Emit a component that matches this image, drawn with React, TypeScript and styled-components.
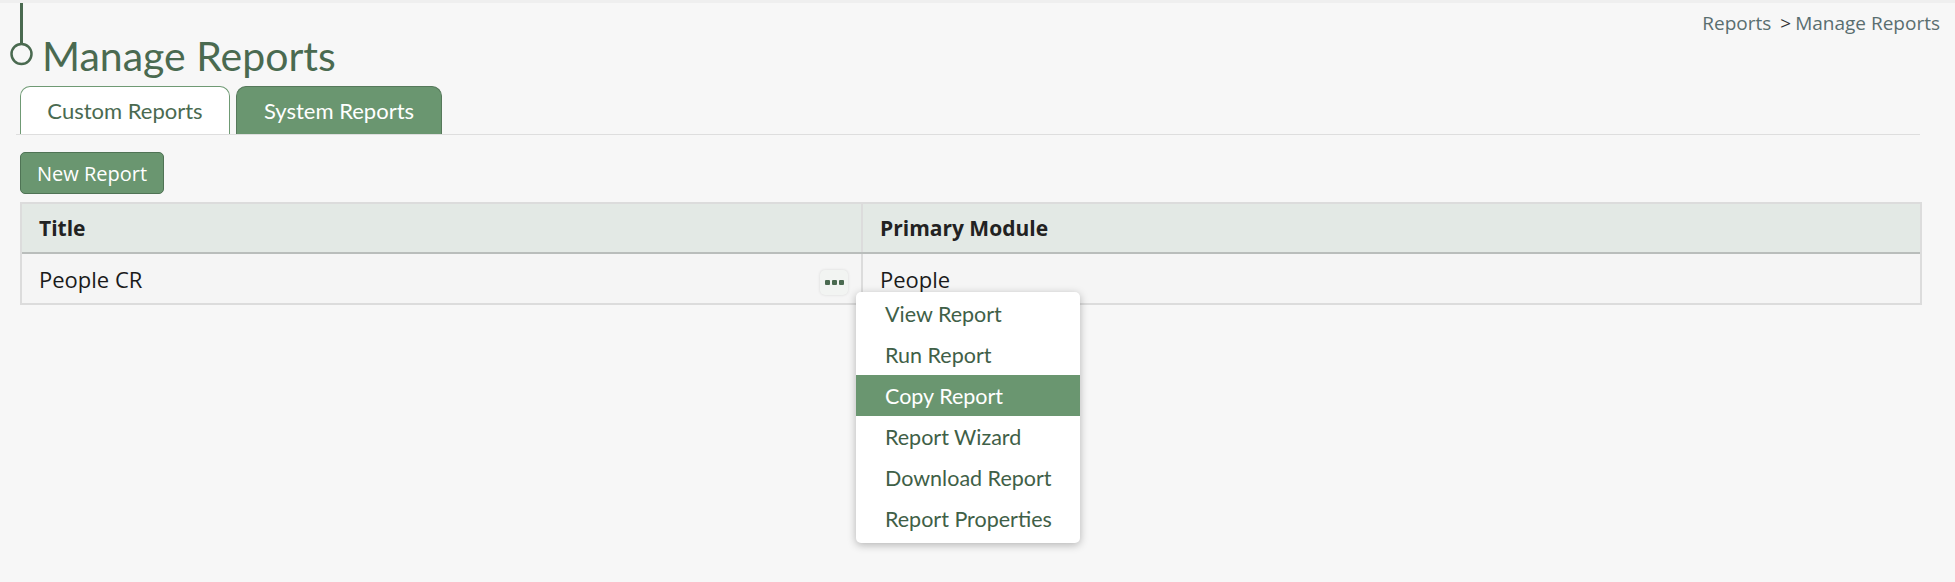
import React from 'react';
import styled, { createGlobalStyle } from 'styled-components';

const GlobalStyle = createGlobalStyle`
  html, body {
    margin: 0;
    padding: 0;
    background: #f7f7f7;
  }
  body {
    font-family: 'Open Sans', 'Noto Sans', sans-serif;
    color: #222;
  }
`;

const Page = styled.div`
  width: 1955px;
  height: 582px;
  background: #f7f7f7;
  border-top: 3px solid #efefef;
  box-sizing: border-box;
  overflow: hidden;
`;

const Header = styled.div`
  display: flex;
  justify-content: space-between;
  align-items: flex-start;
  padding: 0 15px 0 9px;
  height: 83px;
`;

const TitleWrap = styled.div`
  display: flex;
  align-items: flex-start;
`;

const Title = styled.h2`
  margin: 30px 0 0 7px;
  font-family: 'Lato', sans-serif;
  font-weight: 400;
  font-size: 41px;
  line-height: 46px;
  color: #4a6a50;
`;

const Breadcrumb = styled.div`
  margin-top: 7px;
  font-family: 'Open Sans', sans-serif;
  font-size: 19px;
  color: #5a6e70;
  span {
    color: #333;
    margin: 0 4px 0 9px;
  }
`;

const Tabs = styled.div`
  display: flex;
  gap: 6px;
  margin: 0 35px 0 16px;
  padding-left: 4px;
  border-bottom: 1px solid #dedede;
`;

const Tab = styled.div<{ active?: boolean }>`
  width: 210px;
  height: 48px;
  box-sizing: border-box;
  display: flex;
  align-items: center;
  justify-content: center;
  border-radius: 10px 10px 0 0;
  border: 1px solid ${p => (p.active ? '#6f9a74' : '#56795b')};
  border-bottom: none;
  background: ${p => (p.active ? '#fff' : '#6a9670')};
  color: ${p => (p.active ? '#4a6a50' : '#fff')};
  font-family: 'Lato', sans-serif;
  font-size: 22px;
  &:last-child {
    width: 206px;
  }
`;

const Content = styled.div`
  padding: 17px 33px 0 20px;
`;

const Button = styled.button`
  height: 42px;
  width: 144px;
  background: #6a9670;
  border: 1px solid #4f7355;
  border-radius: 5px;
  color: #fff;
  font-family: 'Open Sans', sans-serif;
  font-size: 20px;
  padding: 0;
`;

const Table = styled.div`
  margin-top: 8px;
  border: 2px solid #dcdcdc;
  width: 1902px;
  box-sizing: border-box;
  position: relative;
`;

const Row = styled.div<{ head?: boolean }>`
  display: grid;
  grid-template-columns: 839px 1fr;
  height: ${p => (p.head ? '48px' : '49px')};
  background: ${p => (p.head ? '#e3e9e5' : '#f5f5f5')};
  border-bottom: ${p => (p.head ? '2px solid #b9bdbb' : 'none')};
`;

const Cell = styled.div<{ head?: boolean }>`
  display: flex;
  align-items: center;
  justify-content: space-between;
  padding: 0 13px 0 17px;
  font-size: ${p => (p.head ? '21px' : '22px')};
  font-weight: ${p => (p.head ? 700 : 400)};
  color: ${p => (p.head ? '#222' : '#1a1a1a')};
  & + & {
    border-left: 2px solid #dcdcdc;
  }
`;

const DotsButton = styled.div`
  width: 28px;
  height: 25px;
  margin-top: 8px;
  border-radius: 5px;
  background: #f2f4f2;
  box-shadow: 0 0 3px rgba(0, 0, 0, 0.12);
  display: flex;
  align-items: center;
  justify-content: center;
  gap: 2px;
  i {
    width: 5px;
    height: 5px;
    background: #4a6a50;
    border-radius: 1px;
  }
`;

const Menu = styled.ul`
  position: absolute;
  left: 834px;
  top: 88px;
  width: 224px;
  margin: 0;
  padding: 1px 0 4px;
  list-style: none;
  background: #fff;
  border-radius: 5px;
  box-shadow: 0 2px 8px rgba(0, 0, 0, 0.28);
  z-index: 2;
`;

const MenuItem = styled.li<{ active?: boolean }>`
  height: 41px;
  display: flex;
  align-items: center;
  padding-left: 29px;
  font-family: 'Lato', sans-serif;
  font-size: 21.5px;
  color: ${p => (p.active ? '#fff' : '#3f6047')};
  background: ${p => (p.active ? '#6a9670' : 'transparent')};
`;

const menuItems = [
  'View Report',
  'Run Report',
  'Copy Report',
  'Report Wizard',
  'Download Report',
  'Report Properties',
];

export default function App() {
  return (
    <Page>
      <GlobalStyle />
      <Header>
        <TitleWrap>
          <svg width="26" height="70" viewBox="0 0 26 70">
            <line x1="12.5" y1="0" x2="12.5" y2="41" stroke="#4a6a50" strokeWidth="3" />
            <circle cx="12.5" cy="51" r="10" fill="none" stroke="#4a6a50" strokeWidth="2.5" />
          </svg>
          <Title>Manage Reports</Title>
        </TitleWrap>
        <Breadcrumb>
          Reports<span>&gt;</span>Manage Reports
        </Breadcrumb>
      </Header>
      <Tabs>
        <Tab active>Custom Reports</Tab>
        <Tab>System Reports</Tab>
      </Tabs>
      <Content>
        <Button>New Report</Button>
        <Table>
          <Row head>
            <Cell head>Title</Cell>
            <Cell head>Primary Module</Cell>
          </Row>
          <Row>
            <Cell>
              People CR
              <DotsButton>
                <i />
                <i />
                <i />
              </DotsButton>
            </Cell>
            <Cell>People</Cell>
          </Row>
          <Menu>
            {menuItems.map((m, i) => (
              <MenuItem key={m} active={i === 2}>
                {m}
              </MenuItem>
            ))}
          </Menu>
        </Table>
      </Content>
    </Page>
  );
}
